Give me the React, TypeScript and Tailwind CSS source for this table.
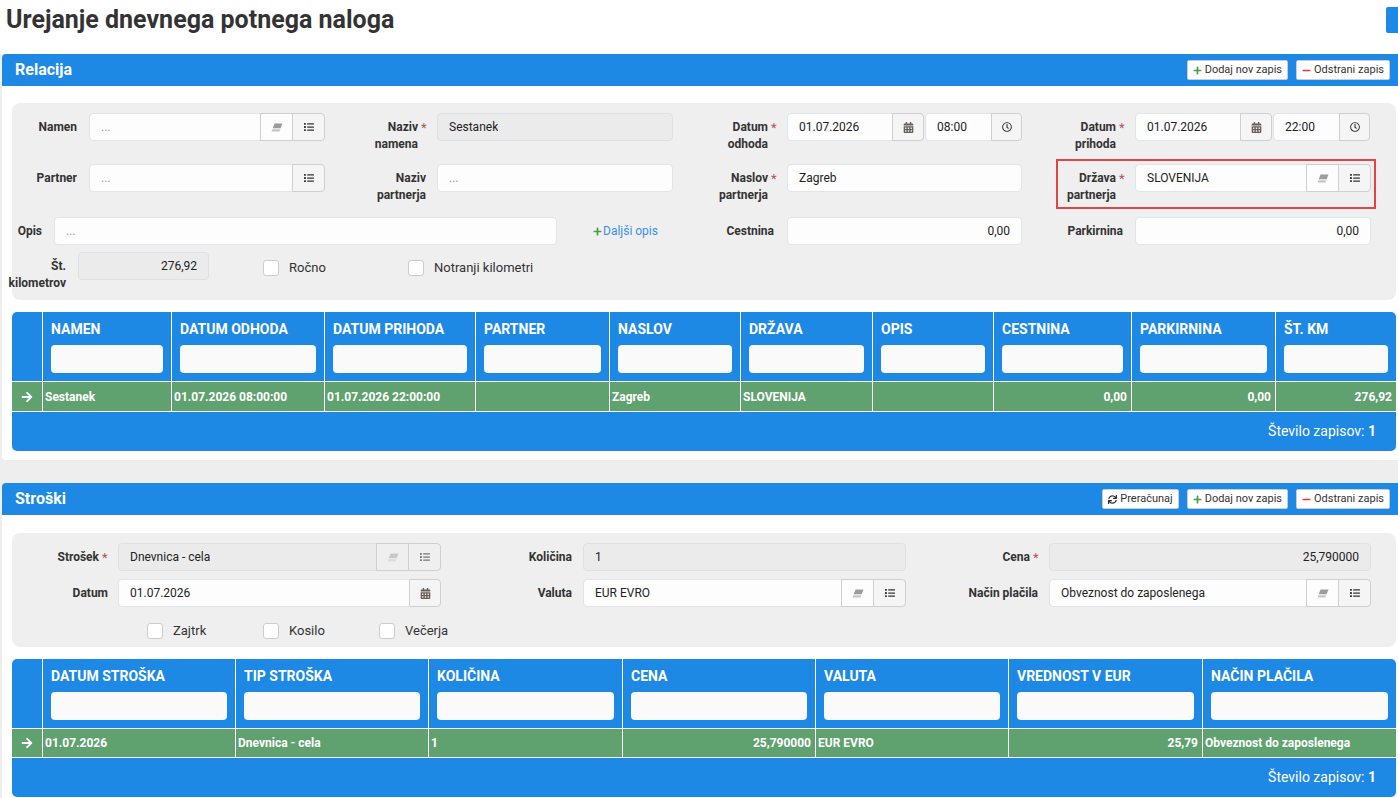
import React from 'react';
import {
  FaPlus,
  FaMinus,
  FaList,
  FaCalendarAlt,
  FaRegClock,
  FaSync,
  FaArrowRight,
} from 'react-icons/fa';

type Addon = 'eraser' | 'list' | 'calendar' | 'clock';

const addonWidth: Record<Addon, string> = {
  eraser: 'w-[33px]',
  list: 'w-[33px]',
  calendar: 'w-[32px]',
  clock: 'w-[31px]',
};

// old-style slanted eraser glyph
const EraserIcon: React.FC<{ muted?: boolean }> = ({ muted }) => (
  <svg width="12" height="9" viewBox="0 0 12 9">
    <polygon points="3.6,0.5 11.5,0.5 9.6,5.3 1.7,5.3" fill={muted ? '#c8c8c8' : '#9c9c9c'} />
    <polygon points="1.4,6.2 9.3,6.2 8.4,8.5 0.5,8.5" fill={muted ? '#dcdcdc' : '#c4c4c4'} />
  </svg>
);

const AddonButton: React.FC<{ kind: Addon; last: boolean; muted?: boolean }> = ({ kind, last, muted }) => (
  <div
    className={`-ml-px flex h-full shrink-0 items-center justify-center border border-[#cfcfcf] ${addonWidth[kind]} ${
      last ? 'rounded-r-[4px]' : ''
    } ${muted ? 'bg-[#efefef]' : kind === 'eraser' ? 'bg-[#fdfdfd]' : 'bg-[#f5f5f5]'}`}
  >
    {kind === 'eraser' && <EraserIcon muted={muted} />}
    {kind === 'list' && <FaList size={10} className={muted ? 'text-[#777]' : 'text-[#333]'} />}
    {kind === 'calendar' && <FaCalendarAlt size={11} className="text-[#6b5f55]" />}
    {kind === 'clock' && <FaRegClock size={10} className="text-[#333]" />}
  </div>
);

const Field: React.FC<{
  w: string;
  value?: string;
  placeholder?: string;
  right?: boolean;
  readOnly?: boolean;
  addons?: Addon[];
}> = ({ w, value, placeholder, right, readOnly, addons = [] }) => (
  <div className={`flex h-[28px] shrink-0 ${w}`}>
    <div
      className={`flex min-w-0 flex-1 items-center border px-[11px] text-[12px] ${
        addons.length ? 'rounded-l-[4px]' : 'rounded-[4px]'
      } ${right ? 'justify-end' : ''} ${
        readOnly ? 'border-[#dde1e5] bg-[#ebebeb]' : 'border-[#e1e4e8] bg-[#fdfdfd]'
      }`}
    >
      {value ? (
        <span className="truncate text-[#222]">{value}</span>
      ) : (
        <span className="text-[#9a9a9a]">{placeholder}</span>
      )}
    </div>
    {addons.map((a, i) => (
      <AddonButton key={i} kind={a} last={i === addons.length - 1} muted={readOnly} />
    ))}
  </div>
);

const Label: React.FC<{ w: string; pr: string; lines: string[]; req?: boolean }> = ({ w, pr, lines, req }) => (
  <div className={`shrink-0 pt-[6px] text-[12px] font-bold leading-[17px] text-[#333] ${w} ${pr}`}>
    <div className={`flex flex-col items-end whitespace-nowrap ${req ? 'pr-[8px]' : ''}`}>
      {lines.map((l, i) => (
        <span key={i} className="relative">
          {l}
          {req && i === 0 && (
            <span className="absolute left-full top-0 ml-[3px] text-[13px] font-normal text-[#b5524e]">*</span>
          )}
        </span>
      ))}
    </div>
  </div>
);

const Check: React.FC<{ label: string; w: string }> = ({ label, w }) => (
  <div className={`flex shrink-0 items-center gap-[10px] ${w}`}>
    <div className="h-[16px] w-[16px] rounded-[3px] border border-[#cccccc] bg-white" />
    <span className="text-[13px] text-[#333]">{label}</span>
  </div>
);

const HeaderButton: React.FC<{ icon: React.ReactNode; children: React.ReactNode }> = ({ icon, children }) => (
  <button className="flex h-[20px] items-center gap-[3px] rounded-[2px] border border-[#cccccc] bg-white px-[5px] text-[11px] text-[#333]">
    {icon}
    {children}
  </button>
);

const PanelHeader: React.FC<{ title: string; refresh?: boolean }> = ({ title, refresh }) => (
  <div className="flex h-[32px] items-center justify-between rounded-t-[4px] bg-[#1e88e5] pl-[13px] pr-[16px]">
    <span className="text-[16px] font-bold text-white">{title}</span>
    <div className="flex gap-[8px]">
      {refresh && (
        <HeaderButton icon={<FaSync size={9} className="text-[#333]" />}>Preračunaj</HeaderButton>
      )}
      <HeaderButton icon={<FaPlus size={9} className="text-[#43a047]" />}>Dodaj nov zapis</HeaderButton>
      <HeaderButton icon={<FaMinus size={9} className="text-[#e53935]" />}>Odstrani zapis</HeaderButton>
    </div>
  </div>
);

type Col = { w: string; title: string; value: string; right?: boolean };

const DataTable: React.FC<{ cols: Col[]; rowH: string }> = ({ cols, rowH }) => (
  <div className="overflow-hidden rounded-[5px] bg-[#1e88e5]">
    <div className="flex h-[69px]">
      <div className="w-[30px] shrink-0" />
      {cols.map((c) => (
        <div key={c.title} className={`shrink-0 border-l border-white px-[8px] pt-[9px] ${c.w}`}>
          <div className="whitespace-nowrap text-[14px] font-bold leading-[17px] text-white">{c.title}</div>
          <div className="mt-[7px] h-[28px] rounded-[4px] bg-[#fafafa]" />
        </div>
      ))}
    </div>
    <div className={`flex border-y border-white bg-[#5fa16f] ${rowH}`}>
      <div className="flex w-[30px] shrink-0 items-center justify-center">
        <FaArrowRight size={12} className="text-white" />
      </div>
      {cols.map((c) => (
        <div
          key={c.title}
          className={`flex shrink-0 items-center border-l border-white pl-[2px] pr-[4px] text-[12px] font-bold text-white ${
            c.right ? 'justify-end' : ''
          } ${c.w}`}
        >
          <span className="whitespace-nowrap">{c.value}</span>
        </div>
      ))}
    </div>
    <div className="flex h-[39px] items-center justify-end pr-[20px] text-[14px] text-white">
      Število zapisov:&nbsp;<span className="font-bold">1</span>
    </div>
  </div>
);

const relacijaCols: Col[] = [
  { w: 'w-[129px]', title: 'NAMEN', value: 'Sestanek' },
  { w: 'w-[153px]', title: 'DATUM ODHODA', value: '01.07.2026 08:00:00' },
  { w: 'w-[151px]', title: 'DATUM PRIHODA', value: '01.07.2026 22:00:00' },
  { w: 'w-[134px]', title: 'PARTNER', value: '' },
  { w: 'w-[131px]', title: 'NASLOV', value: 'Zagreb' },
  { w: 'w-[132px]', title: 'DRŽAVA', value: 'SLOVENIJA' },
  { w: 'w-[121px]', title: 'OPIS', value: '' },
  { w: 'w-[138px]', title: 'CESTNINA', value: '0,00', right: true },
  { w: 'w-[144px]', title: 'PARKIRNINA', value: '0,00', right: true },
  { w: 'w-[121px]', title: 'ŠT. KM', value: '276,92', right: true },
];

const stroskiCols: Col[] = [
  { w: 'w-[193px]', title: 'DATUM STROŠKA', value: '01.07.2026' },
  { w: 'w-[193px]', title: 'TIP STROŠKA', value: 'Dnevnica - cela' },
  { w: 'w-[194px]', title: 'KOLIČINA', value: '1' },
  { w: 'w-[193px]', title: 'CENA', value: '25,790000', right: true },
  { w: 'w-[193px]', title: 'VALUTA', value: 'EUR EVRO' },
  { w: 'w-[194px]', title: 'VREDNOST V EUR', value: '25,79', right: true },
  { w: 'w-[194px]', title: 'NAČIN PLAČILA', value: 'Obveznost do zaposlenega' },
];

const RelacijaForm: React.FC = () => (
  <div className="h-[197px] rounded-[8px] bg-[#efefef] pt-[10px]">
    <div className="flex h-[51px]">
      <Label w="w-[77px]" pr="pr-[12px]" lines={['Namen']} />
      <Field w="w-[236px]" placeholder="..." addons={['eraser', 'list']} />
      <Label w="w-[112px]" pr="pr-[11px]" lines={['Naziv', 'namena']} req />
      <Field w="w-[236px]" value="Sestanek" readOnly />
      <Label w="w-[114px]" pr="pr-[11px]" lines={['Datum', 'odhoda']} req />
      <div className="flex gap-px">
        <Field w="w-[137px]" value="01.07.2026" addons={['calendar']} />
        <Field w="w-[97px]" value="08:00" addons={['clock']} />
      </div>
      <Label w="w-[113px]" pr="pr-[11px]" lines={['Datum', 'prihoda']} req />
      <div className="flex gap-px">
        <Field w="w-[137px]" value="01.07.2026" addons={['calendar']} />
        <Field w="w-[97px]" value="22:00" addons={['clock']} />
      </div>
    </div>
    <div className="flex h-[53px]">
      <Label w="w-[77px]" pr="pr-[12px]" lines={['Partner']} />
      <Field w="w-[236px]" placeholder="..." addons={['list']} />
      <Label w="w-[112px]" pr="pr-[11px]" lines={['Naziv', 'partnerja']} />
      <Field w="w-[236px]" placeholder="..." />
      <Label w="w-[114px]" pr="pr-[11px]" lines={['Naslov', 'partnerja']} req />
      <Field w="w-[235px]" value="Zagreb" />
      <div className="relative flex">
        <Label w="w-[113px]" pr="pr-[11px]" lines={['Država', 'partnerja']} req />
        <Field w="w-[236px]" value="SLOVENIJA" addons={['eraser', 'list']} />
        <div className="pointer-events-none absolute left-[34px] top-[-5px] h-[50px] w-[320px] border-2 border-[#e0463f]" />
      </div>
    </div>
    <div className="flex h-[35px]">
      <Label w="w-[42px]" pr="pr-[12px]" lines={['Opis']} />
      <Field w="w-[503px]" placeholder="..." />
      <div className="flex h-[28px] w-[116px] shrink-0 items-center pl-[36px] text-[12px] text-[#3a8ee6]">
        <FaPlus size={9} className="mr-[1px] text-[#43a047]" />
        Daljši opis
      </div>
      <Label w="w-[114px]" pr="pr-[13px]" lines={['Cestnina']} />
      <Field w="w-[235px]" value="0,00" right />
      <Label w="w-[113px]" pr="pr-[12px]" lines={['Parkirnina']} />
      <Field w="w-[236px]" value="0,00" right />
    </div>
    <div className="flex">
      <Label w="w-[66px]" pr="pr-[12px]" lines={['Št.', 'kilometrov']} />
      <Field w="w-[131px]" value="276,92" right readOnly />
      <div className="ml-[54px] flex h-[32px] items-center">
        <Check label="Ročno" w="w-[145px]" />
        <Check label="Notranji kilometri" w="w-[160px]" />
      </div>
    </div>
  </div>
);

const StroskiForm: React.FC = () => (
  <div className="h-[114px] rounded-[8px] bg-[#efefef] pt-[10px]">
    <div className="flex h-[36px]">
      <Label w="w-[106px]" pr="pr-[11px]" lines={['Strošek']} req />
      <Field w="w-[323px]" value="Dnevnica - cela" readOnly addons={['eraser', 'list']} />
      <Label w="w-[142px]" pr="pr-[11px]" lines={['Količina']} />
      <Field w="w-[323px]" value="1" readOnly />
      <Label w="w-[143px]" pr="pr-[11px]" lines={['Cena']} req />
      <Field w="w-[322px]" value="25,790000" right readOnly />
    </div>
    <div className="flex h-[36px]">
      <Label w="w-[106px]" pr="pr-[10px]" lines={['Datum']} />
      <Field w="w-[323px]" value="01.07.2026" addons={['calendar']} />
      <Label w="w-[142px]" pr="pr-[11px]" lines={['Valuta']} />
      <Field w="w-[323px]" value="EUR EVRO" addons={['eraser', 'list']} />
      <Label w="w-[143px]" pr="pr-[11px]" lines={['Način plačila']} />
      <Field w="w-[322px]" value="Obveznost do zaposlenega" addons={['eraser', 'list']} />
    </div>
    <div className="flex h-[32px] items-center pl-[135px]">
      <Check label="Zajtrk" w="w-[116px]" />
      <Check label="Kosilo" w="w-[116px]" />
      <Check label="Večerja" w="w-[116px]" />
    </div>
  </div>
);

export default function App() {
  return (
    <div className="w-full overflow-hidden bg-white font-['Roboto',sans-serif] text-[#333]">
      <div className="flex h-[54px] items-start justify-between pl-[6px] pt-[4px]">
        <h1 className="text-[25px] font-bold leading-[32px] text-[#333]">Urejanje dnevnega potnega naloga</h1>
        <div className="mt-[3px] h-[26px] w-[12px] rounded-l-[2px] bg-[#1e88e5]" />
      </div>
      <div className="bg-[#eeeeee] pl-[2px]">
        <div className="w-[1404px] rounded-[4px] bg-white">
          <PanelHeader title="Relacija" />
          <div className="px-[10px] pb-[9px] pt-[17px]">
            <RelacijaForm />
            <div className="mt-[12px]">
              <DataTable cols={relacijaCols} rowH="h-[31px]" />
            </div>
          </div>
        </div>
        <div className="h-[23px]" />
        <div className="w-[1404px] rounded-[4px] bg-white">
          <PanelHeader title="Stroški" refresh />
          <div className="px-[10px] pb-[9px] pt-[18px]">
            <StroskiForm />
            <div className="mt-[12px]">
              <DataTable cols={stroskiCols} rowH="h-[30px]" />
            </div>
          </div>
        </div>
      </div>
    </div>
  );
}
